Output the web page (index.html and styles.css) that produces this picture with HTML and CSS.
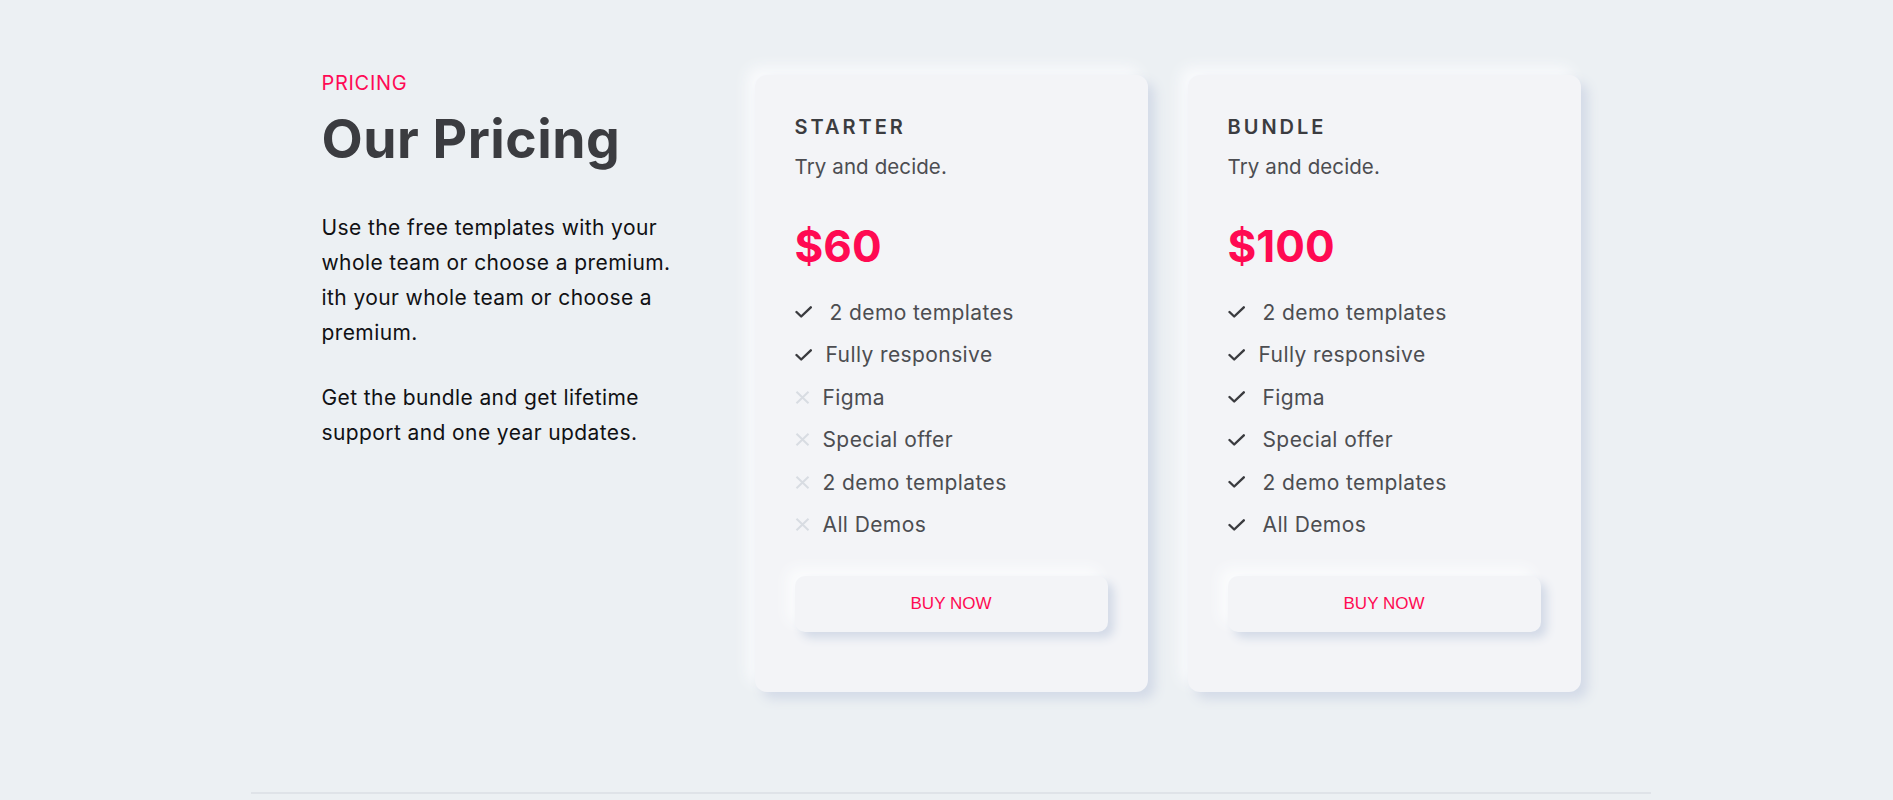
FILE: index.html
```html
<!DOCTYPE html>
<html lang="en">
<head>
<meta charset="utf-8">
<title>Our Pricing</title>
<link rel="stylesheet" href="styles.css">
</head>
<body>
<div class="page">
  <section class="pricing">
    <div class="intro">
      <div class="eyebrow">PRICING</div>
      <h1 class="title">Our Pricing</h1>
      <p class="lead">Use the free templates with your whole team or choose a premium. ith your whole team or choose a premium.</p>
      <p class="lead second">Get the bundle and get lifetime support and one year updates.</p>
    </div>

    <div class="card">
      <h2 class="plan">STARTER</h2>
      <p class="tag">Try and decide.</p>
      <div class="price">$60</div>
      <ul class="features">
        <li class="feat"><span class="ico"><svg width="17" height="12" viewBox="0 0 17 12"><path d="M1.5 6 L6.2 10.5 L15.8 1.3" fill="none" stroke="#3a3b3f" stroke-width="2.4" stroke-linecap="round" stroke-linejoin="round"/></svg></span><span class="txt">2 demo templates</span></li>
        <li class="feat near"><span class="ico"><svg width="17" height="12" viewBox="0 0 17 12"><path d="M1.5 6 L6.2 10.5 L15.8 1.3" fill="none" stroke="#3a3b3f" stroke-width="2.4" stroke-linecap="round" stroke-linejoin="round"/></svg></span><span class="txt">Fully responsive</span></li>
        <li class="feat no"><span class="ico"><svg width="17" height="13" viewBox="0 0 17 13"><path d="M1.5 0.8 L13.5 12.2 M13.5 0.8 L1.5 12.2" fill="none" stroke="#d8dce2" stroke-width="2"/></svg></span><span class="txt">Figma</span></li>
        <li class="feat no"><span class="ico"><svg width="17" height="13" viewBox="0 0 17 13"><path d="M1.5 0.8 L13.5 12.2 M13.5 0.8 L1.5 12.2" fill="none" stroke="#d8dce2" stroke-width="2"/></svg></span><span class="txt">Special offer</span></li>
        <li class="feat no"><span class="ico"><svg width="17" height="13" viewBox="0 0 17 13"><path d="M1.5 0.8 L13.5 12.2 M13.5 0.8 L1.5 12.2" fill="none" stroke="#d8dce2" stroke-width="2"/></svg></span><span class="txt">2 demo templates</span></li>
        <li class="feat no"><span class="ico"><svg width="17" height="13" viewBox="0 0 17 13"><path d="M1.5 0.8 L13.5 12.2 M13.5 0.8 L1.5 12.2" fill="none" stroke="#d8dce2" stroke-width="2"/></svg></span><span class="txt">All Demos</span></li>
      </ul>
      <button class="buy">BUY NOW</button>
    </div>

    <div class="card">
      <h2 class="plan">BUNDLE</h2>
      <p class="tag">Try and decide.</p>
      <div class="price">$100</div>
      <ul class="features">
        <li class="feat"><span class="ico"><svg width="17" height="12" viewBox="0 0 17 12"><path d="M1.5 6 L6.2 10.5 L15.8 1.3" fill="none" stroke="#3a3b3f" stroke-width="2.4" stroke-linecap="round" stroke-linejoin="round"/></svg></span><span class="txt">2 demo templates</span></li>
        <li class="feat near"><span class="ico"><svg width="17" height="12" viewBox="0 0 17 12"><path d="M1.5 6 L6.2 10.5 L15.8 1.3" fill="none" stroke="#3a3b3f" stroke-width="2.4" stroke-linecap="round" stroke-linejoin="round"/></svg></span><span class="txt">Fully responsive</span></li>
        <li class="feat"><span class="ico"><svg width="17" height="12" viewBox="0 0 17 12"><path d="M1.5 6 L6.2 10.5 L15.8 1.3" fill="none" stroke="#3a3b3f" stroke-width="2.4" stroke-linecap="round" stroke-linejoin="round"/></svg></span><span class="txt">Figma</span></li>
        <li class="feat"><span class="ico"><svg width="17" height="12" viewBox="0 0 17 12"><path d="M1.5 6 L6.2 10.5 L15.8 1.3" fill="none" stroke="#3a3b3f" stroke-width="2.4" stroke-linecap="round" stroke-linejoin="round"/></svg></span><span class="txt">Special offer</span></li>
        <li class="feat"><span class="ico"><svg width="17" height="12" viewBox="0 0 17 12"><path d="M1.5 6 L6.2 10.5 L15.8 1.3" fill="none" stroke="#3a3b3f" stroke-width="2.4" stroke-linecap="round" stroke-linejoin="round"/></svg></span><span class="txt">2 demo templates</span></li>
        <li class="feat"><span class="ico"><svg width="17" height="12" viewBox="0 0 17 12"><path d="M1.5 6 L6.2 10.5 L15.8 1.3" fill="none" stroke="#3a3b3f" stroke-width="2.4" stroke-linecap="round" stroke-linejoin="round"/></svg></span><span class="txt">All Demos</span></li>
      </ul>
      <button class="buy">BUY NOW</button>
    </div>
  </section>
</div>
</body>
</html>
```

FILE: styles.css
```css
* { box-sizing: border-box; }

html, body {
  background: #ecf0f3;
}

body {
  margin: 0;
  padding-left: 9px;
  font-family: Inter, "Noto Sans", sans-serif;
  overflow: hidden;
}

.page {
  width: 1400px;
  margin: 0 auto;
}

.pricing {
  display: flex;
  justify-content: center;
  align-items: flex-start;
  gap: 40px;
  padding: 71px 0 100px;
  border-bottom: 2px solid #dfe3e8;
}

.intro {
  width: 393px;
}

.eyebrow {
  font-size: 20px;
  line-height: 24px;
  color: #ff0a55;
  letter-spacing: 0.7px;
}

.title {
  margin: 13px 0 0;
  font-size: 53.5px;
  line-height: 62.4px;
  font-weight: 700;
  color: #3b3c40;
  letter-spacing: 0.5px;
}

.lead {
  margin: 40px 0 0;
  max-width: 362px;
  font-size: 21px;
  line-height: 35px;
  letter-spacing: 0.4px;
  color: #111114;
}

.lead.second {
  margin-top: 30px;
}

.card {
  width: 393px;
  margin-top: 4px;
  padding: 40px 40px 60px;
  background: #f3f4f7;
  border-radius: 12px;
  box-shadow: 7px 7px 12px #d3dae7, -8px -8px 14px #f9fafc;
}

.plan {
  margin: 0;
  font-size: 20px;
  line-height: 24px;
  font-weight: 600;
  letter-spacing: 3px;
  color: #3b3c40;
}

.tag {
  margin: 16px 0 0;
  font-size: 20.5px;
  line-height: 24px;
  letter-spacing: 0.1px;
  color: #4c4d51;
}

.price {
  margin-top: 40px;
  font-size: 44px;
  line-height: 55px;
  font-weight: 700;
  color: #ff0a52;
}

.features {
  list-style: none;
  margin: 17px 0 0;
  padding: 0;
}

.feat {
  display: flex;
  align-items: center;
  height: 42.5px;
  font-size: 21px;
  letter-spacing: 0.4px;
  color: #4c4d51;
}

.ico {
  display: flex;
  width: 17px;
  flex: none;
}

.txt {
  margin-left: 18px;
}

.feat.near .txt {
  margin-left: 14px;
}

.feat.no .txt {
  margin-left: 11px;
}

.buy {
  display: block;
  width: 100%;
  height: 56px;
  margin-top: 30px;
  border: 0;
  border-radius: 10px;
  background: #f3f4f7;
  font-family: "Liberation Sans", Arial, sans-serif;
  font-size: 17px;
  color: #ff0a52;
  box-shadow: 6px 6px 10px #d3dae7, -8px -8px 14px #fbfcfd;
}
```
